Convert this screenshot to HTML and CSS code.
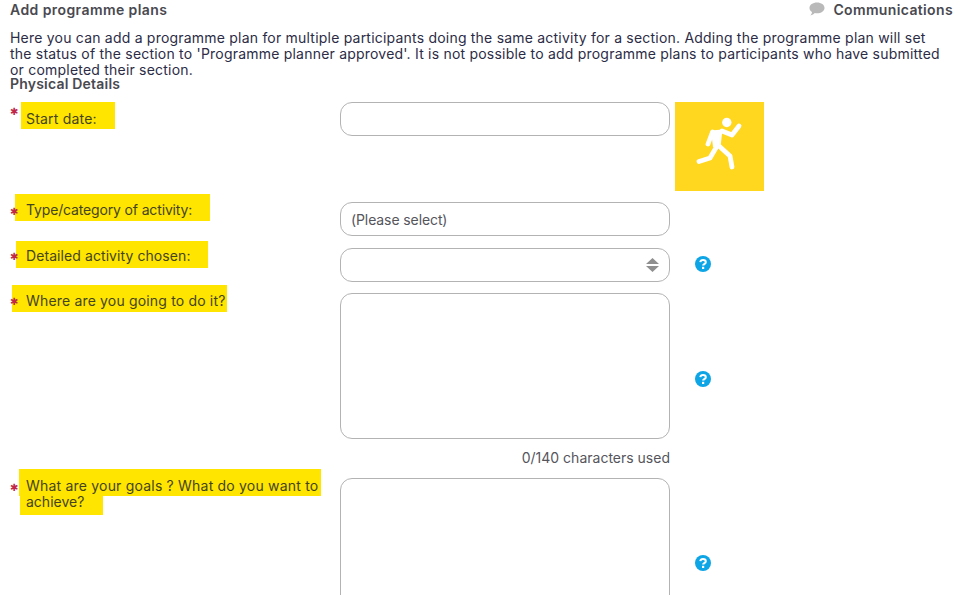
FILE: index.html
```html
<!DOCTYPE html>
<html lang="en">
<head>
<meta charset="utf-8">
<title>Add programme plans</title>
<link rel="stylesheet" href="styles.css">
</head>
<body>
<header class="top">
  <h1 class="title">Add programme plans</h1>
  <a class="comms">
    <svg class="comms-icon" viewBox="0 0 16 14" width="16" height="14"><path d="M8 .5c4.200 0 7.500 2.400 7.500 5.400S12.200 11.300 8 11.300c-.8 0-1.500-.1-2.200-.2C4.800 12.200 3.300 13.300 1.300 13.500c.9-1 1.600-2.200 1.700-3.600C1.400 8.900.5 7.500.5 5.900.5 2.900 3.800.5 8 .5z" fill="#b9b9b9"/></svg>
    Communications
  </a>
</header>
<p class="intro">Here you can add a programme plan for multiple participants doing the same activity for a section. Adding the programme plan will set the status of the section to 'Programme planner approved'. It is not possible to add programme plans to participants who have submitted or completed their section.</p>
<h2 class="section">Physical Details</h2>
<form class="form">
  <div class="row row-start">
    <div class="label"><span class="star star-start">✱</span><span class="hl hl-start">Start date:</span></div>
    <div class="field"><input class="input" type="text"></div>
    <div class="aside">
      <div class="activity">
        <svg viewBox="0 0 89 89" width="89" height="89"><circle cx="51.800" cy="20.500" r="4.700" fill="#fff"/><path d="M36 28.500 47.500 27.500 45.500 45 38 45z" fill="#fff"/><g fill="none" stroke="#fff" stroke-width="4.800" stroke-linecap="round" stroke-linejoin="round"><path d="M33 42 37.500 30"/><path d="M47 29 57 33 64 24"/><path d="M42 44 35 56 24 59.500"/><path d="M44 44 55 54 57 65"/></g></svg>
      </div>
    </div>
  </div>
  <div class="row row-type">
    <div class="label"><span class="star star-type">✱</span><span class="hl hl-type">Type/category of activity:</span></div>
    <div class="field"><input class="input input-value" type="text" value="(Please select)"></div>
    <div class="aside"></div>
  </div>
  <div class="row row-detail">
    <div class="label"><span class="star star-detail">✱</span><span class="hl hl-detail">Detailed activity chosen:</span></div>
    <div class="field">
      <div class="select-wrap">
        <select class="input select"><option></option></select>
        <svg class="arrows" viewBox="0 0 13 14" width="13" height="14"><path d="M6.500 0 13 6H0zM0 8h13l-6.500 6z" fill="#8f8f8f"/></svg>
      </div>
    </div>
    <div class="aside aside-help"><svg class="help" viewBox="0 0 16 16" width="16" height="16"><circle cx="8" cy="8" r="8" fill="#0ea5e6"/><path d="M5.300 6.100C5.500 4.700 6.600 4 8 4c1.500 0 2.800.9 2.800 2.200 0 1.900-2.700 1.900-2.700 3.400" fill="none" stroke="#fff" stroke-width="2"/><rect x="7" y="10.800" width="2.200" height="2.200" fill="#fff"/></svg></div>
  </div>
  <div class="row row-where">
    <div class="label"><span class="star star-where">✱</span><span class="hl hl-where">Where are you going to do it?</span></div>
    <div class="field">
      <textarea class="area area-where"></textarea>
      <div class="count">0/140 characters used</div>
    </div>
    <div class="aside aside-where"><svg class="help" viewBox="0 0 16 16" width="16" height="16"><circle cx="8" cy="8" r="8" fill="#0ea5e6"/><path d="M5.300 6.100C5.500 4.700 6.600 4 8 4c1.500 0 2.800.9 2.800 2.200 0 1.900-2.700 1.900-2.700 3.400" fill="none" stroke="#fff" stroke-width="2"/><rect x="7" y="10.800" width="2.200" height="2.200" fill="#fff"/></svg></div>
  </div>
  <div class="row row-goals">
    <div class="label"><span class="star star-goals">✱</span><span class="hl hl-goals">What are your goals ? What do you want to</span><span class="hl hl-goals2">achieve?</span></div>
    <div class="field"><textarea class="area area-goals"></textarea></div>
    <div class="aside aside-goals"><svg class="help" viewBox="0 0 16 16" width="16" height="16"><circle cx="8" cy="8" r="8" fill="#0ea5e6"/><path d="M5.300 6.100C5.500 4.700 6.600 4 8 4c1.500 0 2.800.9 2.800 2.200 0 1.900-2.700 1.900-2.700 3.400" fill="none" stroke="#fff" stroke-width="2"/><rect x="7" y="10.800" width="2.200" height="2.200" fill="#fff"/></svg></div>
  </div>
</form>
</body>
</html>
```
FILE: styles.css
```css
html, body { margin: 0; height: 595px; overflow: hidden; background: #fff; }
body { font-family: "Inter", "Open Sans", sans-serif; font-size: 14px; color: #3c3c46; padding: 0 10px; box-sizing: border-box; width: 975px; }
.top { display: flex; justify-content: space-between; align-items: center; height: 20px; padding-right: 12px; }
.title { margin: 0; font-size: 14px; line-height: 20px; font-weight: 600; color: #494950; letter-spacing: .42px; }
.comms { display: flex; align-items: center; gap: 8px; font-weight: 600; color: #494950; letter-spacing: .36px; padding-bottom: 2px; }
.comms-icon { display: block; }
.intro { margin: 10px 0 0; width: 935px; line-height: 16px; color: #2c2c46; font-size: 14px; letter-spacing: .21px; }
.section { margin: -1px 0 0; font-size: 14px; line-height: 14px; font-weight: 600; color: #494950; letter-spacing: .2px; }
.form { display: flex; flex-direction: column; margin-top: 11px; }
.row { display: grid; grid-template-columns: 330px 330px 1fr; }
.row-start { height: 100px; }
.row-type { height: 46px; }
.row-detail { height: 45px; }
.row-where { height: 185px; }
.row-goals { height: 130px; }
.label { position: relative; padding-left: 16px; line-height: 16px; color: #44441e; }
.star { position: absolute; left: 0; color: #c0284a; font-family: "DejaVu Sans", sans-serif; font-size: 10px; line-height: 9px; }
.star-start { top: 5px; }
.star-type { top: 13px; }
.star-detail { top: 11px; }
.star-where { top: 12px; }
.star-goals { top: 14px; }
.hl { display: block; width: fit-content; background: #ffe500; }
.hl-start { margin-left: -5px; padding: 9px 18px 2px 5px; letter-spacing: .2px; }
.row-type .label { margin-top: -8px; }
.hl-type { margin-left: -11px; padding: 8px 18px 3px 11px; letter-spacing: -.15px; }
.row-detail .label { margin-top: -7px; }
.hl-detail { margin-left: -10px; padding: 7px 17px 4px 10px; letter-spacing: .08px; }
.row-where .label { margin-top: -8px; }
.hl-where { margin-left: -14px; padding: 8px 2px 3px 14px; letter-spacing: .17px; }
.row-goals .label { margin-top: -9px; }
.hl-goals { margin-left: -7px; padding: 9px 3px 2px 7px; letter-spacing: .2px; }
.hl-goals2 { margin-left: -6px; padding: 0 19px 7px 6px; line-height: 12px; }
.field { display: flex; flex-direction: column; width: 330px; }
.input, .area { display: block; box-sizing: border-box; width: 330px; margin: 0; border: 1px solid #b3b3b3; background: #fff; font: inherit; color: #55555c; outline: none; }
.input { height: 34px; border-radius: 12px; padding: 0 10px; }
.input-value { letter-spacing: -.1px; }
.select { appearance: none; -webkit-appearance: none; }
.select-wrap { position: relative; width: 330px; }
.arrows { position: absolute; right: 11px; top: 10px; }
.area { border-radius: 12px; resize: none; padding: 8px 10px; }
.area-where { height: 146px; flex: none; }
.area-goals { height: 200px; flex: none; }
.count { margin-top: 11px; text-align: right; line-height: 16px; color: #55555c; }
.aside { padding-left: 5px; }
.activity { width: 89px; height: 89px; background: #ffd71e; }
.activity svg { display: block; }
.help { display: block; margin-left: 20px; }
.aside-help { padding-top: 8px; }
.aside-where { padding-top: 78px; }
.aside-goals { padding-top: 77px; }
```
